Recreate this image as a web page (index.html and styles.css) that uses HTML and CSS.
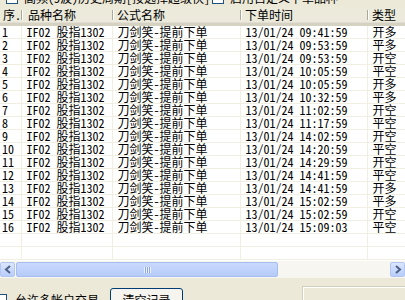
FILE: index.html
```html
<!DOCTYPE html>
<html lang="zh-CN">
<head>
  <meta charset="UTF-8">
  <title>下单记录</title>
  <link rel="stylesheet" href="styles.css">
</head>
<body>
  <div class="top">
    <div class="top-inner">
      <label class="chk chk-a"><span class="box"></span>高频(5波)历史周期[按选择超级快]</label>
      <label class="chk"><span class="box"></span>启用自定义下单品种</label>
    </div>
  </div>

  <div class="list">
    <div class="grid">
      <table>
        <colgroup>
          <col class="w1"><col class="w2"><col class="w3"><col class="w4"><col class="w5">
        </colgroup>
        <thead>
          <tr><th>序.</th><th class="pad-name">品种名称</th><th>公式名称</th><th>下单时间</th><th>类型</th></tr>
        </thead>
        <tbody id="rows"></tbody>
      </table>
    </div>
    <div class="hscroll">
      <div class="sbtn">
        <svg width="8" height="9" viewBox="0 0 8 9"><polyline points="6,1 2,4.5 6,8" fill="none" stroke="#4d6185" stroke-width="2"/></svg>
      </div>
      <div class="thumb"><span class="grip"></span></div>
      <div class="track"></div>
      <div class="sbtn">
        <svg width="8" height="9" viewBox="0 0 8 9"><polyline points="2,1 6,4.5 2,8" fill="none" stroke="#4d6185" stroke-width="2"/></svg>
      </div>
    </div>
  </div>

  <div class="bottom">
    <label class="chk chk-b"><span class="box"></span>允许多帐户交易</label>
    <button class="btn">清空记录</button>
    <div class="panel"></div>
  </div>

  <script>
    const orders = [
      ['09:41:59', '开多'], ['09:53:59', '平多'], ['09:53:59', '开空'], ['10:05:59', '平空'],
      ['10:05:59', '开多'], ['10:32:59', '平多'], ['11:02:59', '开空'], ['11:17:59', '平空'],
      ['14:02:59', '开空'], ['14:20:59', '平空'], ['14:29:59', '开空'], ['14:41:59', '平空'],
      ['14:41:59', '开多'], ['15:02:59', '平多'], ['15:02:59', '开空'], ['15:09:03', '平空']
    ];

    const body = document.getElementById('rows');
    let html = '';
    orders.forEach((o, i) => {
      html += `<tr><td>${i + 1}</td><td>IF02 股指1302</td><td>刀剑笑-提前下单</td><td>13/01/24 ${o[0]}</td><td>${o[1]}</td></tr>`;
    });
    html += '<tr class="empty"><td></td><td></td><td></td><td></td><td></td></tr>';
    html += '<tr class="empty"><td></td><td></td><td></td><td></td><td></td></tr>';
    body.innerHTML = html;
  </script>
</body>
</html>
```

FILE: styles.css
```css
* {
  margin: 0;
  padding: 0;
  box-sizing: border-box;
}

body {
  width: 405px;
  height: 300px;
  overflow: hidden;
  background: #ece9d8;
  font-family: "Noto Sans CJK SC", sans-serif;
  font-feature-settings: "hwid";
  font-size: 12px;
  color: #000;
}

/* checkbox row, mostly scrolled off the top */
.top {
  height: 7px;
  overflow: hidden;
}

.top-inner {
  display: flex;
  margin-top: -10px;
  height: 15px;
  align-items: center;
}

.chk {
  display: flex;
  align-items: center;
  gap: 6px;
  line-height: 13px;
  white-space: nowrap;
}

.chk-a {
  padding-left: 6px;
  width: 212px;
}

.box {
  width: 12px;
  height: 12px;
  background: #fff;
  border: 1px solid #1c5180;
}

/* list view */
.list {
  height: 271px;
  background: #fff;
  display: flex;
  flex-direction: column;
}

.grid {
  height: 254px;
  overflow: hidden;
}

table {
  width: 427px;
  table-layout: fixed;
  border-collapse: collapse;
}

.w1 { width: 21px; }
.w2 { width: 91px; }
.w3 { width: 128px; }
.w4 { width: 127px; }
.w5 { width: 60px; }

th {
  height: 17px;
  font-weight: normal;
  text-align: left;
  padding: 0 0 0 5px;
  background: #ebeadb;
  border-bottom: 3px solid #d6d2c2;
  box-shadow: inset 0 -1px 0 #e2ded6;
  position: relative;
  white-space: nowrap;
  line-height: 15px;
}

th:first-child {
  padding-left: 3px;
}

th.pad-name {
  padding-left: 7px;
}

th + th::before {
  content: "";
  position: absolute;
  left: 0;
  top: 3px;
  bottom: 3px;
  width: 1px;
  background: #aca899;
  box-shadow: 1px 0 0 #fff;
}

td {
  height: 13px;
  line-height: 12px;
  padding: 0 0 0 5px;
  border: 1px solid #f1efe2;
  border-top: none;
  white-space: nowrap;
  overflow: hidden;
}

td:first-child {
  padding-left: 2px;
  border-left: none;
}

/* horizontal scrollbar */
.hscroll {
  height: 17px;
  display: flex;
  background: #f7f6f1;
  padding: 1px 0;
}

.sbtn {
  width: 15px;
  display: flex;
  align-items: center;
  justify-content: center;
  background: linear-gradient(#dbe6fe, #b9cdfb);
  border: 1px solid #b3c6f2;
  border-radius: 2px;
}

.thumb {
  width: 262px;
  margin-left: 1px;
  display: flex;
  align-items: center;
  justify-content: center;
  background: linear-gradient(#cad9fd, #b6cbf9);
  border: 1px solid #a6bdf0;
  border-radius: 2px;
}

.grip {
  width: 7px;
  height: 6px;
  background: repeating-linear-gradient(90deg, #eef3fe 0 1px, #8aa5e0 1px 2px);
}

.track {
  flex: 1;
}

/* bottom controls */
.bottom {
  position: relative;
  height: 22px;
  display: flex;
  align-items: flex-start;
}

.chk-b {
  margin-top: 15px;
  margin-left: -5px;
  gap: 8px;
  width: 115px;
}

.btn {
  margin-top: 10px;
  width: 73px;
  height: 24px;
  font: inherit;
  background: #f5f4ee;
  border: 1px solid #003c74;
  border-radius: 3px;
  line-height: 20px;
}

.panel {
  margin-top: 8px;
  margin-left: 119px;
  flex: 1;
  height: 20px;
  border: 1px solid #d0d0bf;
  border-right: none;
  background: #ece9d8;
  box-shadow: inset 1px 1px 0 #fff;
}
```
